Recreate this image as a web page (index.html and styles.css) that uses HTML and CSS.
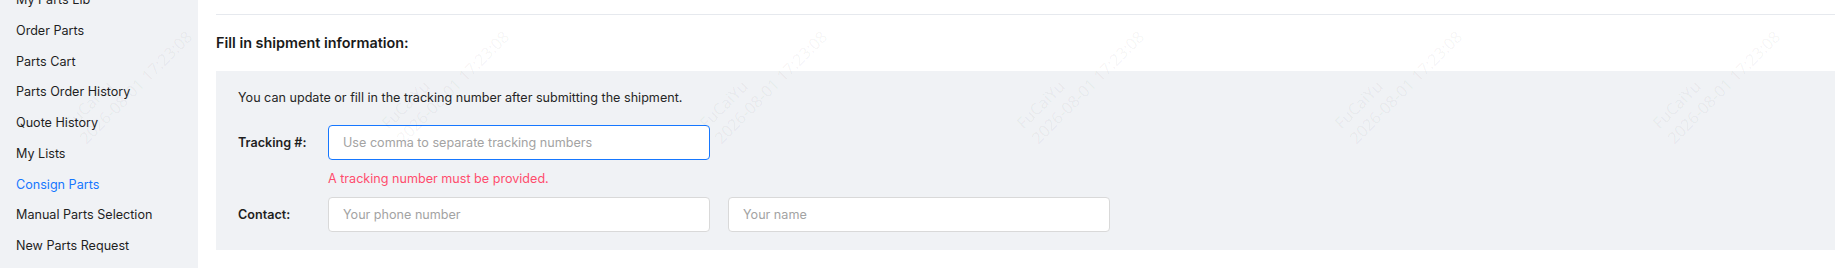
FILE: index.html
```html
<!DOCTYPE html>
<html lang="en">
<head>
<meta charset="utf-8">
<title>Consign Parts</title>
<link rel="stylesheet" href="styles.css">
</head>
<body>
<div class="page">
  <aside class="sidebar">
    <ul class="menu">
      <li class="menu-item">My Parts Lib</li>
      <li class="menu-item">Order Parts</li>
      <li class="menu-item">Parts Cart</li>
      <li class="menu-item">Parts Order History</li>
      <li class="menu-item">Quote History</li>
      <li class="menu-item">My Lists</li>
      <li class="menu-item menu-item-active">Consign Parts</li>
      <li class="menu-item">Manual Parts Selection</li>
      <li class="menu-item">New Parts Request</li>
    </ul>
  </aside>
  <main class="content">
    <div class="divider"></div>
    <h3 class="section-title">Fill in shipment information:</h3>
    <div class="panel">
      <p class="hint">You can update or fill in the tracking number after submitting the shipment.</p>
      <div class="field-row">
        <label class="field-label">Tracking #:</label>
        <div class="field-controls">
          <input class="input input-focused" type="text" placeholder="Use comma to separate tracking numbers">
        </div>
      </div>
      <div class="field-error">A tracking number must be provided.</div>
      <div class="field-row field-row-contact">
        <label class="field-label">Contact:</label>
        <div class="field-controls">
          <input class="input" type="text" placeholder="Your phone number">
          <input class="input" type="text" placeholder="Your name">
        </div>
      </div>
    </div>
  </main>
  <div class="watermarks">
    <div class="wm-cell"><div class="wm"><span>FuCaiYu</span><span>2026-08-01 17:23:08</span></div></div>
    <div class="wm-cell"><div class="wm"><span>FuCaiYu</span><span>2026-08-01 17:23:08</span></div></div>
    <div class="wm-cell"><div class="wm"><span>FuCaiYu</span><span>2026-08-01 17:23:08</span></div></div>
    <div class="wm-cell"><div class="wm"><span>FuCaiYu</span><span>2026-08-01 17:23:08</span></div></div>
    <div class="wm-cell"><div class="wm"><span>FuCaiYu</span><span>2026-08-01 17:23:08</span></div></div>
    <div class="wm-cell"><div class="wm"><span>FuCaiYu</span><span>2026-08-01 17:23:08</span></div></div>
  </div>
</div>
</body>
</html>
```

FILE: styles.css
```css
* {
  box-sizing: border-box;
}

html, body {
  margin: 0;
  padding: 0;
  height: 268px;
  overflow: hidden;
  background: #ffffff;
}

body {
  font-family: Inter, "Noto Sans", sans-serif;
  font-size: 12.6px;
  color: #1f1f1f;
}

.page {
  position: relative;
  display: flex;
  height: 268px;
}

.sidebar {
  flex: 0 0 198px;
  width: 198px;
  background: #f0f2f5;
  overflow: hidden;
}

.menu {
  list-style: none;
  margin: -14.8px 0 0 0;
  padding: 0 0 0 16px;
}

.menu-item {
  height: 30.75px;
  line-height: 30.75px;
  font-size: 12.6px;
  color: #1f1f1f;
  white-space: nowrap;
}

.menu-item-active {
  color: #1677ff;
}

.content {
  flex: 1 1 auto;
  padding: 0 13px 0 18px;
  min-width: 0;
}

.divider {
  height: 15px;
  border-bottom: 1px solid #e6e9ee;
}

.section-title {
  margin: 16.7px 0 0 0;
  font-size: 14.4px;
  font-weight: 600;
  line-height: 22px;
  color: #1a1a1a;
}

.panel {
  margin-top: 17px;
  background: #f0f2f5;
  padding: 16px 22px 18px 22px;
}

.hint {
  margin: 0;
  line-height: 22px;
  font-size: 12.6px;
  color: #262626;
}

.field-row {
  display: flex;
  align-items: center;
  margin-top: 16px;
}

.field-row-contact {
  margin-top: 8px;
}

.field-label {
  flex: 0 0 90px;
  font-weight: 600;
  font-size: 12.6px;
  color: #1f1f1f;
}

.field-controls {
  display: flex;
  gap: 18px;
}

.input {
  width: 382px;
  height: 35px;
  padding: 0 14px;
  border: 1px solid #d9d9d9;
  border-radius: 4px;
  background: #ffffff;
  font-family: Inter, "Noto Sans", sans-serif;
  font-size: 12.6px;
  color: #1f1f1f;
  outline: none;
}

.input::placeholder {
  color: #a3a3a3;
}

.input-focused {
  border-color: #1677ff;
}

.field-error {
  margin: 9px 0 0 90px;
  line-height: 20px;
  font-size: 12.6px;
  color: #ff4d6d;
}

.watermarks {
  position: absolute;
  top: 0;
  left: -30.8px;
  display: flex;
  pointer-events: none;
}

.wm-cell {
  flex: 0 0 317.6px;
  width: 317.6px;
  height: 160px;
  display: flex;
  align-items: center;
  justify-content: center;
}

.wm {
  display: flex;
  flex-direction: column;
  transform: rotate(-45deg);
  font-family: "Open Sans", sans-serif;
  font-size: 16px;
  line-height: 21px;
  color: rgba(0, 0, 0, 0.05);
  white-space: nowrap;
}
```
